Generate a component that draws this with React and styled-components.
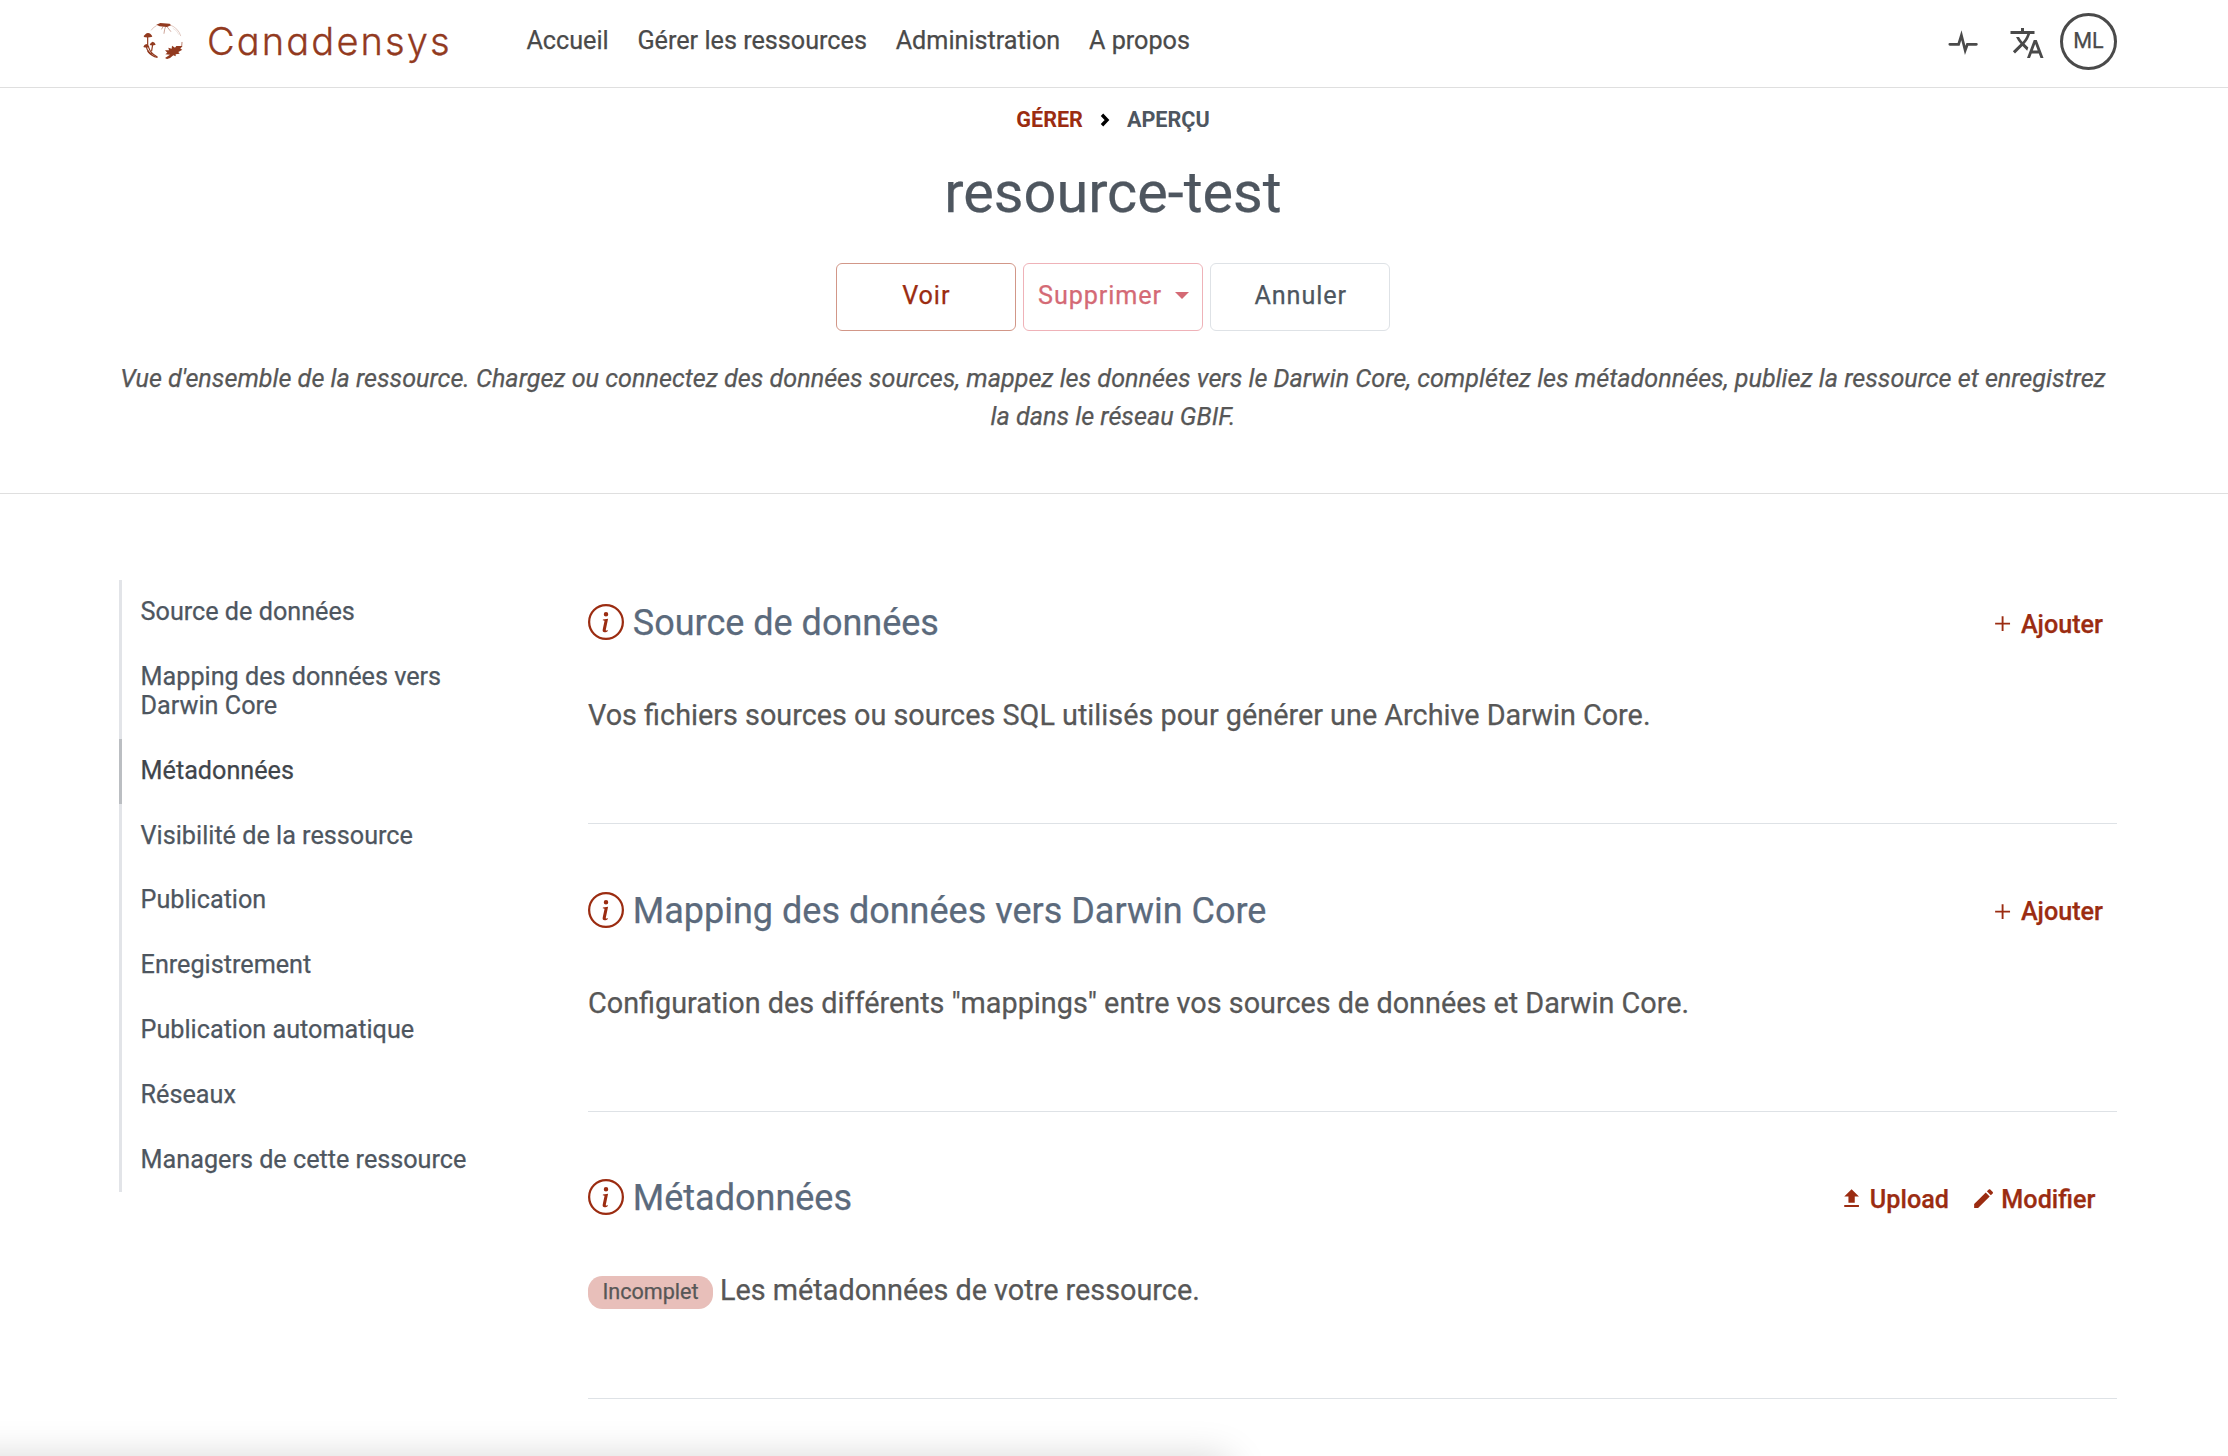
import React from "react";
import styled, { createGlobalStyle, css } from "styled-components";
import { BsInfoCircle } from "react-icons/bs";

const color = {
  primary: "#9b2c11",
  text: "#575757",
  dark: "#4e565f",
  heading: "#5b6a7c",
  line: "#dee2e6",
};

const GlobalStyle = createGlobalStyle`
  *, *::before, *::after { box-sizing: border-box; }
  html, body { margin: 0; background: #fff; overflow: hidden; }
  body {
    font-family: Roboto, "Liberation Sans", sans-serif;
    font-size: 25.2px;
    line-height: 1.5;
    color: ${color.text};
    -webkit-text-stroke: 0.25px currentColor;
  }
  #root { min-height: 1456px; }
  a { color: inherit; text-decoration: none; }
`;

const Container = styled.div`
  width: 2008.4px;
  margin-left: 108.8px;
`;

/* Top bar */
const TopBar = styled.header`
  height: 88px;
  border-bottom: 1px solid #dfdfdf;
`;

const TopBarInner = styled(Container)`
  display: flex;
  align-items: center;
  height: 81px;
`;

const Brand = styled.a`
  display: flex;
  align-items: center;
  width: 403.2px;
  padding-left: 34.4px;
  color: #923a1f;
`;

const Emblem = styled.svg`
  width: 40px;
  height: 37.4px;
  margin-right: 23.8px;
`;

const BrandName = styled.span`
  font-family: Inter, sans-serif;
  font-weight: 300;
  font-size: 38px;
  line-height: 46px;
  letter-spacing: 2.15px;
  font-feature-settings: "cv11";
  -webkit-text-stroke: 0.3px currentColor;
`;

const Nav = styled.nav`
  display: flex;
  flex: 1;
  color: #4a4a4a;
`;

const NavLink = styled.a`
  padding: 0 14.4px;
`;

const Tools = styled.div`
  display: flex;
  align-items: center;
  color: #4a4a4a;
`;

const ToolIcon = styled.svg`
  display: block;
  width: ${(p) => p.$w}px;
  height: ${(p) => p.$h}px;
  margin: 5px ${(p) => p.$gap}px 0 0;
`;

const Avatar = styled.span`
  display: flex;
  align-items: center;
  justify-content: center;
  width: 57.6px;
  height: 57.6px;
  margin-top: 2px;
  border: 3px solid #4a4a4a;
  border-radius: 50%;
  font-size: 21.6px;
`;

/* Page heading */
const Heading = styled.section`
  height: 406px;
  padding-top: 16.2px;
  border-bottom: 1px solid #dfdfdf;
`;

const HeadingInner = styled(Container)`
  display: flex;
  flex-direction: column;
  align-items: center;
  padding: 0 10.8px;
`;

const Breadcrumb = styled.nav`
  display: flex;
  align-items: center;
  font-size: 21.6px;
  font-weight: 700;
  line-height: 32.4px;
  text-transform: uppercase;
  -webkit-text-stroke: 0;
`;

const Crumb = styled.span`
  color: ${(p) => (p.$link ? color.primary : color.dark)};
`;

const Chevron = styled.svg`
  width: 10px;
  height: 14px;
  margin: 0 17.4px 0 16.6px;
`;

const Title = styled.h1`
  margin: 21.2px 0 36px;
  color: ${color.dark};
  font-size: 57.6px;
  font-weight: 400;
  line-height: 69.2px;
`;

const ButtonRow = styled.div`
  display: flex;
  gap: 7.2px;
`;

const tones = {
  primary: css`
    color: ${color.primary};
    border-color: #d29788;
  `,
  danger: css`
    color: #d46a75;
    border-color: #efb2b8;
  `,
  neutral: css`
    color: ${color.dark};
    border-color: ${color.line};
  `,
};

const Button = styled.button`
  display: flex;
  align-items: center;
  justify-content: center;
  width: 180px;
  height: 68px;
  padding: 0 0 2px 1px;
  border: 1px solid;
  border-radius: 6px;
  background: #fff;
  font: 400 25.2px Roboto, sans-serif;
  letter-spacing: 0.9px;
  ${(p) => tones[p.$tone]}
`;

const Caret = styled.span`
  margin: 0 0 0 13px;
  border: 7px solid transparent;
  border-top-color: currentColor;
  border-bottom: 0;
`;

const Lead = styled.p`
  margin: 28.8px 0 0;
  font-style: italic;
  text-align: center;
  line-height: 37.8px;
`;

/* Body */
const Body = styled(Container)`
  display: flex;
  align-items: flex-start;
  padding-left: 10.6px;
`;

const SideNav = styled.nav`
  display: flex;
  flex-direction: column;
  width: 368px;
  margin: 86.4px 100.6px 0 0;
`;

const SideLink = styled.a`
  padding: 18px 17.6px 18px 18.2px;
  border-left: 3px solid ${(p) => (p.$active ? "#bbbec2" : "#e2e4e8")};
  color: ${(p) => (p.$active ? "#40454b" : color.dark)};
  line-height: 28.8px;
`;

const Sections = styled.main`
  flex: 1;
  padding-top: 42.6px;
`;

const Section = styled.section`
  height: 287.5px;
  padding-top: 65.7px;
  border-bottom: 1px solid ${color.line};
`;

const SectionHead = styled.div`
  display: flex;
  align-items: center;
  height: 43.2px;
`;

const InfoIcon = styled(BsInfoCircle)`
  width: 36px;
  height: 36px;
  margin: 0 8.8px 3px 0;
  color: ${color.primary};
`;

const SectionTitle = styled.h2`
  flex: 1;
  margin: 0;
  color: ${color.heading};
  font-size: 36px;
  font-weight: 400;
  line-height: 43.2px;
`;

const Actions = styled.div`
  display: flex;
  gap: 21.6px;
  padding: 1.2px ${(p) => (p.$inset ? 21.8 : 14.2)}px 0 0;
`;

const Action = styled.a`
  display: flex;
  align-items: center;
  gap: 5.6px;
  color: ${color.primary};
  font-weight: 500;
`;

const ActionIcon = styled.svg`
  width: 25.2px;
  height: 25.2px;
  margin-bottom: 1px;
  fill: currentColor;
`;

const SectionText = styled.p`
  display: flex;
  align-items: center;
  margin: 48.6px 0 0;
  font-size: 28.8px;
  line-height: 43.2px;
`;

const Badge = styled.span`
  height: 33px;
  margin: 3px 7px 0 0;
  padding: 0 14.4px;
  border-radius: 14.4px;
  background: #e8bfba;
  font-size: 21.6px;
  line-height: 32px;
`;

/* Edge of the status bubble resting just below the window */
const StatusShade = styled.div`
  position: fixed;
  left: -60px;
  bottom: -62px;
  width: 1291px;
  height: 60px;
  border-radius: 14px;
  box-shadow: 0 0 38px rgba(0, 0, 0, 0.17);
`;

const icons = {
  plus: "M4.9 11.1H11.1V4.9H12.9V11.1H19.1V12.9H12.9V19.1H11.1V12.9H4.9z",
  upload: "M5 20h14v-2H5v2zM5 10h4v6h6v-6h4l-7-7-7 7z",
  edit: "M3 17.25V21h3.75L17.81 9.94l-3.75-3.75L3 17.25zM20.71 7.04c.39-.39.39-1.02 0-1.41l-2.34-2.34c-.39-.39-1.02-.39-1.41 0l-1.83 1.83 3.75 3.75 1.83-1.83z",
};

const navItems = ["Accueil", "Gérer les ressources", "Administration", "A propos"];

const sideItems = [
  "Source de données",
  "Mapping des données vers Darwin Core",
  "Métadonnées",
  "Visibilité de la ressource",
  "Publication",
  "Enregistrement",
  "Publication automatique",
  "Réseaux",
  "Managers de cette ressource",
];

const sections = [
  {
    title: "Source de données",
    text: "Vos fichiers sources ou sources SQL utilisés pour générer une Archive Darwin Core.",
    actions: [["plus", "Ajouter"]],
  },
  {
    title: "Mapping des données vers Darwin Core",
    text: 'Configuration des différents "mappings" entre vos sources de données et Darwin Core.',
    actions: [["plus", "Ajouter"]],
  },
  {
    title: "Métadonnées",
    badge: "Incomplet",
    text: "Les métadonnées de votre ressource.",
    actions: [["upload", "Upload"], ["edit", "Modifier"]],
  },
];

function EmblemArt() {
  return (
    <Emblem viewBox="40 36 120 112" fill="currentColor">
      <path d="M80 44 L92 39 L120 41 L124 46 L112 51 L90 49 Z" />
      <g fill="none" stroke="currentColor" strokeLinecap="round">
        <path d="M80 47 Q70 52 65 60" strokeWidth="2" opacity=".45" />
        <path d="M108 50 L105 58 L103 70 M112 50 L123 64 M100 50 L96 57" strokeWidth="2.5" opacity=".55" />
        <path d="M122 45 Q146 54 153 77" strokeWidth="2" opacity=".4" />
        <path d="M130 55 L140 62 L147 73" strokeWidth="1.6" opacity=".25" />
        <path d="M157 97 L156 110" strokeWidth="2.4" opacity=".8" />
        <path d="M54 78 V104 M50 110 Q53 126 66 133 M69 104 L66 122 M57 112 Q62 130 82 140" strokeWidth="3.6" />
      </g>
      <path d="M42 81 Q46 70 55 69 Q64 70 68 80 Q55 84 42 81Z" />
      <path d="M41 111 Q43 104 50 102 Q57 104 59 111 Q50 114 41 111Z" />
      <path d="M60 105 Q62 97 69 95 Q76 97 78 104 Q69 108 60 105Z" />
      <path d="M55 120 Q66 136 84 141 L83 144 Q64 140 53 125Z" />
      <path d="M158 108 L140 108 L136 113 L127 107 L126 116 L116 113 L118 121 L106 121 L113 128 L107 133 L121 134 L106 144 L112 147 Q123 145 131 136 L138 139 L138 133 L150 131 L146 126 L158 119 L152 116 Z" />
    </Emblem>
  );
}

export default function App() {
  return (
    <>
      <GlobalStyle />
      <TopBar>
        <TopBarInner>
          <Brand href="#">
            <EmblemArt />
            <BrandName>Canadensys</BrandName>
          </Brand>
          <Nav>
            {navItems.map((n) => (
              <NavLink key={n} href="#">{n}</NavLink>
            ))}
          </Nav>
          <Tools>
            <ToolIcon viewBox="0 0 30 26" $w={30} $h={26} $gap={30.6}>
              <path
                d="M1.8 14.3H10.6L13.4 5.2L17.2 20.3L19.4 14.3H28.4"
                fill="none"
                stroke="currentColor"
                strokeWidth="2.7"
                strokeLinecap="round"
                strokeMiterlimit="10"
              />
            </ToolIcon>
            <ToolIcon viewBox="0 0 24 24" $w={36} $h={36} $gap={14.8} fill="currentColor">
              <path d="M12.87 15.07l-2.54-2.51.03-.03c1.74-1.94 2.98-4.17 3.71-6.53H17V4h-7V2H8v2H1v1.99h11.17C11.5 7.92 10.44 9.75 9 11.35 8.07 10.32 7.3 9.19 6.69 8h-2c.73 1.63 1.73 3.17 2.98 4.56l-5.09 5.02L4 19l5-5 3.11 3.11.76-2.04zM18.5 10h-2L12 22h2l1.12-3h4.75L21 22h2l-4.5-12zm-2.62 7l1.62-4.33L19.12 17h-3.24z" />
            </ToolIcon>
            <Avatar>ML</Avatar>
          </Tools>
        </TopBarInner>
      </TopBar>

      <Heading>
        <HeadingInner>
          <Breadcrumb>
            <Crumb $link>Gérer</Crumb>
            <Chevron viewBox="0 0 10 14">
              <path d="M2 1.8L7 7L2 12.2" fill="none" stroke="#000" strokeWidth="3.4" />
            </Chevron>
            <Crumb>Aperçu</Crumb>
          </Breadcrumb>
          <Title>resource-test</Title>
          <ButtonRow>
            <Button $tone="primary">Voir</Button>
            <Button $tone="danger">
              Supprimer
              <Caret />
            </Button>
            <Button $tone="neutral">Annuler</Button>
          </ButtonRow>
          <Lead>
            Vue d'ensemble de la ressource. Chargez ou connectez des données sources, mappez les
            données vers le Darwin Core, complétez les métadonnées, publiez la ressource et
            enregistrez la dans le réseau GBIF.
          </Lead>
        </HeadingInner>
      </Heading>

      <Body>
        <SideNav>
          {sideItems.map((s) => (
            <SideLink key={s} href="#" $active={s === "Métadonnées"}>{s}</SideLink>
          ))}
        </SideNav>
        <Sections>
          {sections.map((s) => (
            <Section key={s.title}>
              <SectionHead>
                <InfoIcon />
                <SectionTitle>{s.title}</SectionTitle>
                <Actions $inset={s.actions.length > 1}>
                  {s.actions.map(([icon, label]) => (
                    <Action key={label} href="#">
                      <ActionIcon viewBox="0 0 24 24">
                        <path d={icons[icon]} />
                      </ActionIcon>
                      {label}
                    </Action>
                  ))}
                </Actions>
              </SectionHead>
              <SectionText>
                {s.badge && <Badge>{s.badge}</Badge>}
                {s.text}
              </SectionText>
            </Section>
          ))}
        </Sections>
      </Body>
      <StatusShade />
    </>
  );
}
